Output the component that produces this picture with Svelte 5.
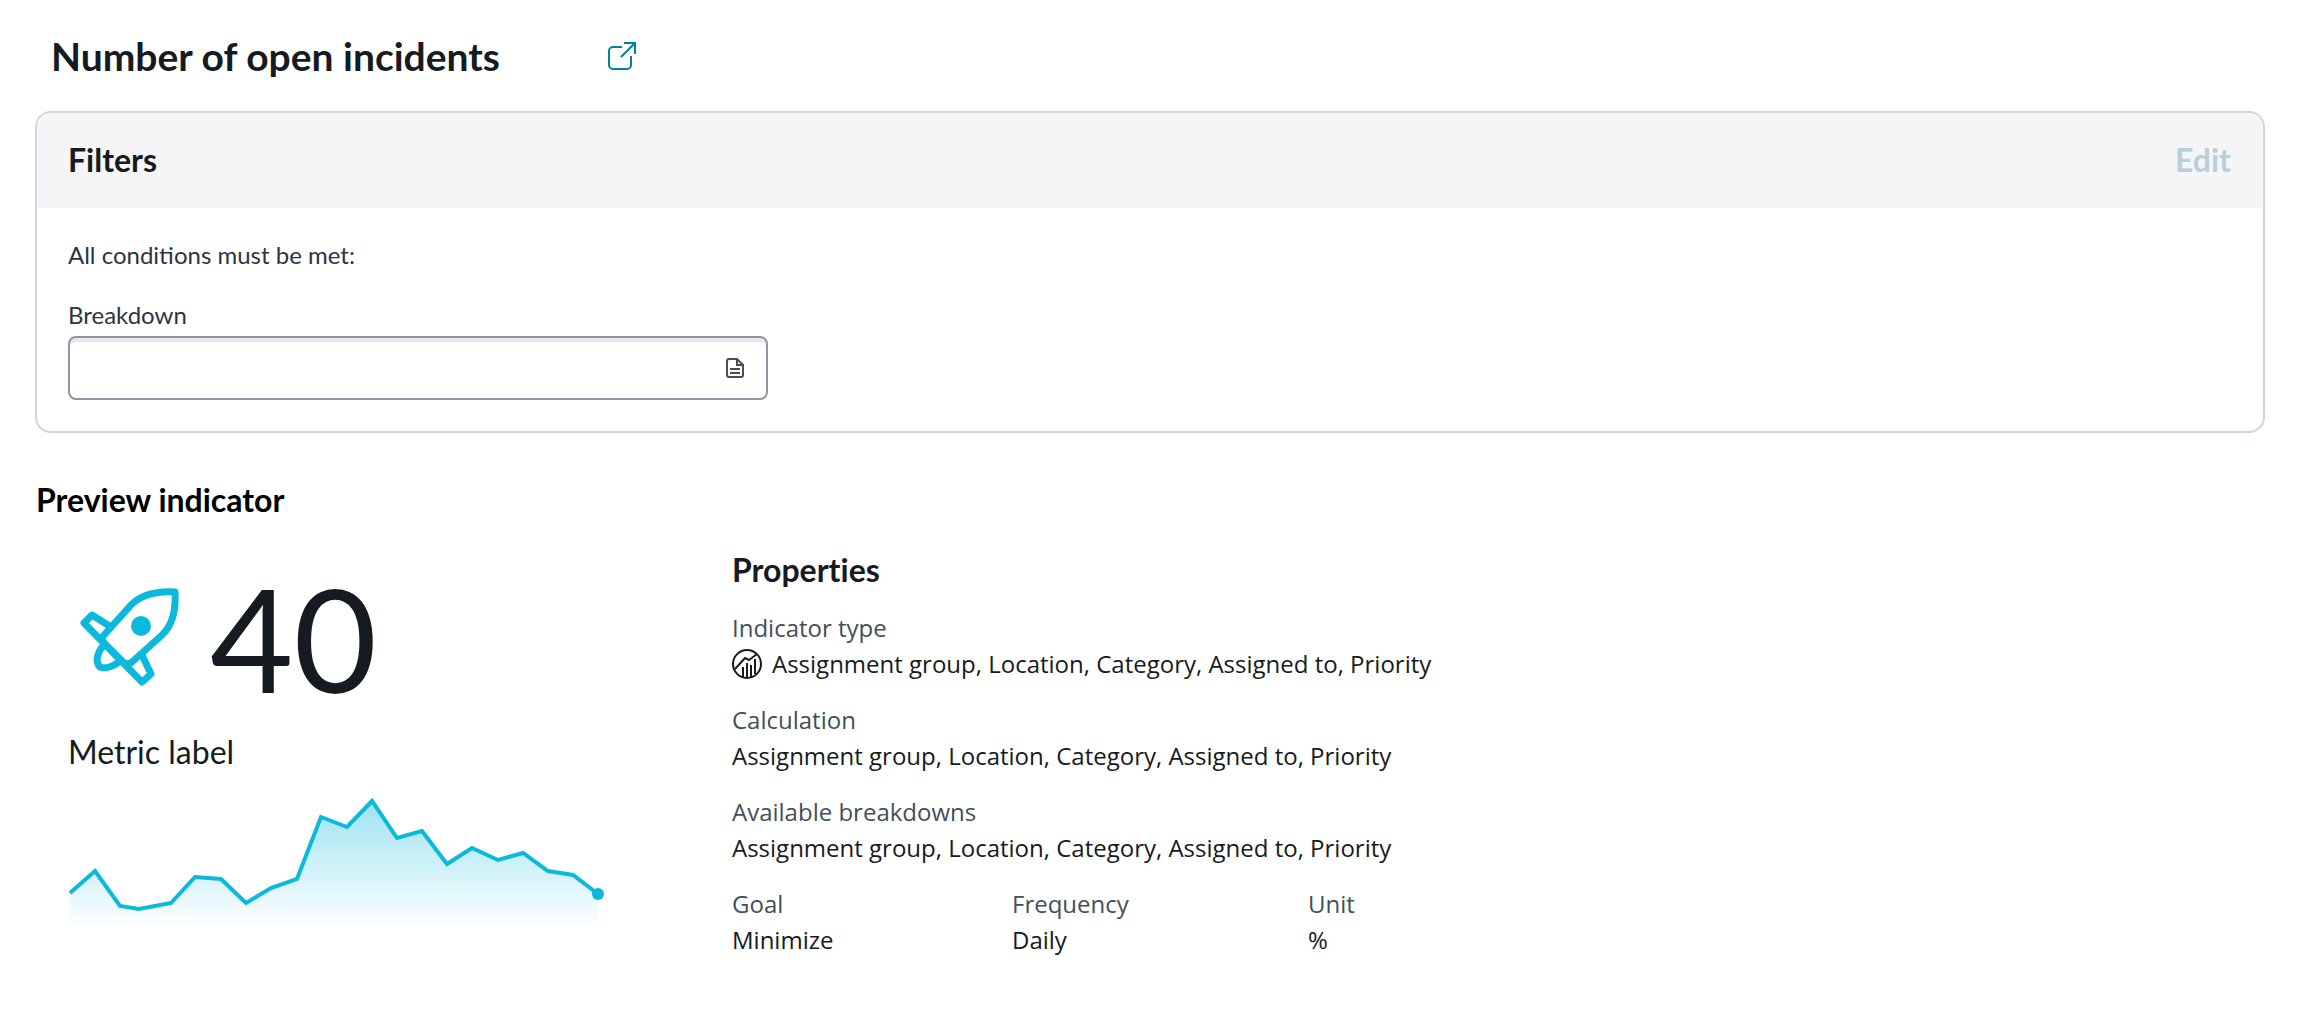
<script>
    let breakdown = $state('');

    const assignment = 'Assignment group, Location, Category, Assigned to, Priority';

    const properties = [
        { label: 'Indicator type', value: assignment, icon: true },
        { label: 'Calculation', value: assignment },
        { label: 'Available breakdowns', value: assignment }
    ];

    const details = [
        { label: 'Goal', value: 'Minimize' },
        { label: 'Frequency', value: 'Daily' },
        { label: 'Unit', value: '%' }
    ];

    // x, y pairs of the trend line, in viewBox units
    const points = [
        [2, 97], [27, 75], [52, 110], [71, 113], [103, 107], [127, 81], [153, 83], [178, 107],
        [203, 92], [229, 83], [253, 21], [279, 31], [304, 5], [329, 42], [354, 35], [379, 68],
        [404, 52], [430, 64], [455, 57], [480, 75], [505, 79], [530, 98]
    ];
    const base = 132;

    const line = points.map((p) => p.join(',')).join(' ');
    const last = points[points.length - 1];
    const area = `${points[0][0]},${base} ${line} ${last[0]},${base}`;
</script>

<main>
    <header class="title">
        <h1>Number of open incidents</h1>
        <a href="#incidents" aria-label="Open in new window">
            <svg width="32" height="32" viewBox="0 0 32 32" fill="none" stroke="currentColor" stroke-width="2">
                <path d="M16 7H7a4 4 0 0 0-4 4v14a4 4 0 0 0 4 4h14a4 4 0 0 0 4-4v-9" />
                <path d="M18 3h11v11M29 3L15 17" />
            </svg>
        </a>
    </header>

    <section class="panel">
        <div class="panel-header">
            <h2>Filters</h2>
            <button class="edit" disabled>Edit</button>
        </div>
        <div class="panel-body">
            <p>All conditions must be met:</p>
            <label for="breakdown">Breakdown</label>
            <div class="field">
                <input id="breakdown" type="text" bind:value={breakdown} />
                <svg width="18" height="20" viewBox="0 0 18 20" fill="none" stroke="currentColor" stroke-width="2">
                    <path d="M11 1H3a2 2 0 0 0-2 2v14a2 2 0 0 0 2 2h12a2 2 0 0 0 2-2V7z" />
                    <path d="M11 1v6h6M4 11h10M4 15h10" />
                </svg>
            </div>
        </div>
    </section>

    <h2 class="preview-title">Preview indicator</h2>

    <div class="preview">
        <section class="metric">
            <div class="score">
                <svg class="rocket" width="100" height="100" viewBox="0 0 100 100" fill="none" stroke="currentColor" stroke-width="7" stroke-linejoin="round">
                    <path d="M95 4C76 3 61 7 51 17L24 47Q20 51 24 55L43 74Q47 78 52 74L82 47C93 37 96 22 95 4z" />
                    <path d="M31 39L12 27L4 35L62 94L71 86L62 67" />
                    <path d="M23 58C17 65 15 74 20 79C25 81 33 79 40 73" />
                    <circle cx="61" cy="38" r="10" fill="currentColor" stroke="none" />
                </svg>
                <span>40</span>
            </div>
            <h3>Metric label</h3>
            <svg class="trend" viewBox="0 0 540 134" role="img" aria-label="Metric trend">
                <defs>
                    <linearGradient id="fade" x1="0" y1="0" x2="0" y2="1">
                        <stop offset="0" stop-color="#0bb9dc" stop-opacity="0.4" />
                        <stop offset="1" stop-color="#0bb9dc" stop-opacity="0" />
                    </linearGradient>
                </defs>
                <polygon points={area} fill="url(#fade)" />
                <polyline points={line} fill="none" stroke="#0bb9dc" stroke-width="4" />
                <circle cx={last[0]} cy={last[1]} r="6" fill="#0bb9dc" />
            </svg>
        </section>

        <section class="properties">
            <h2>Properties</h2>
            <dl>
                {#each properties as item}
                    <div>
                        <dt>{item.label}</dt>
                        <dd>
                            {#if item.icon}
                                <svg width="30" height="30" viewBox="0 0 30 30" fill="none" stroke="currentColor" stroke-width="2">
                                    <circle cx="15" cy="15" r="14" />
                                    <path d="M3 20L13 9L17 11L25 5" />
                                    <path d="M11 28V18M15 29V14M19 28V16M23 25V10" />
                                </svg>
                            {/if}
                            {item.value}
                        </dd>
                    </div>
                {/each}
            </dl>
            <dl class="details">
                {#each details as item}
                    <div>
                        <dt>{item.label}</dt>
                        <dd>{item.value}</dd>
                    </div>
                {/each}
            </dl>
        </section>
    </div>
</main>

<style>
    :global(body) {
        margin: 0;
        background: #fff;
    }

    main {
        padding: 32px 35px;
        font-family: Lato, sans-serif;
        font-size: 24px;
        line-height: 36px;
        color: #161b21;
    }

    h1, h2, h3, p, dl, dd {
        margin: 0;
    }

    h1 {
        font-size: 39px;
        line-height: 48px;
    }

    h2 {
        font-size: 32px;
        line-height: 40px;
    }

    .title {
        display: flex;
        align-items: center;
        gap: 106px;
        padding-left: 16px;
    }

    .title a {
        display: flex;
        color: #0080a3;
    }

    .panel {
        margin-top: 31px;
        border: 2px solid #d1d5dc;
        border-radius: 16px;
        overflow: hidden;
    }

    .panel-header {
        display: flex;
        align-items: center;
        justify-content: space-between;
        padding: 27px 32px 28px 31px;
        background: #f5f5f8;
    }

    .edit {
        padding: 0;
        border: 0;
        background: none;
        font: inherit;
        font-size: 32px;
        font-weight: bold;
        line-height: 40px;
        color: #b7d0d9;
    }

    .panel-body {
        padding: 29px 31px 31px;
        color: #2e3442;
    }

    .panel-body label {
        display: block;
        margin-top: 24px;
    }

    .field {
        display: flex;
        align-items: center;
        box-sizing: border-box;
        width: 700px;
        max-width: 100%;
        height: 64px;
        margin-top: 3px;
        padding-right: 22px;
        border: 2px solid #8f95a5;
        border-radius: 8px;
        box-shadow: inset 0 4px #e6e8ea;
        color: #464d5c;
    }

    .field input {
        flex: 1;
        height: 100%;
        padding: 0 16px;
        border: 0;
        outline: 0;
        background: none;
        font: inherit;
    }

    .preview-title {
        margin-top: 47px;
        padding-left: 1px;
        color: #000;
    }

    .preview {
        display: flex;
    }

    .metric {
        width: 697px;
        padding: 32px 0 0 33px;
        box-sizing: border-box;
    }

    .score {
        display: flex;
        align-items: center;
        gap: 30px;
        padding-left: 12px;
        font-size: 144px;
        line-height: 172px;
    }

    .rocket {
        color: #0bb9dc;
    }

    h3 {
        margin-top: 8px;
        font-size: 32px;
        line-height: 40px;
        font-weight: normal;
    }

    .trend {
        display: block;
        width: 540px;
        margin-top: 24px;
    }

    .properties {
        padding-top: 30px;
    }

    .properties h2 {
        font-variant-ligatures: none;
    }

    .properties dl {
        display: flex;
        flex-direction: column;
        gap: 20px;
        margin-top: 20px;
        font-family: "Open Sans", sans-serif;
    }

    .properties dt {
        color: #435059;
    }

    .properties dd {
        display: flex;
        align-items: center;
        gap: 10px;
    }

    .properties .details {
        display: grid;
        grid-template-columns: 280px 296px auto;
        gap: 0;
    }
</style>
